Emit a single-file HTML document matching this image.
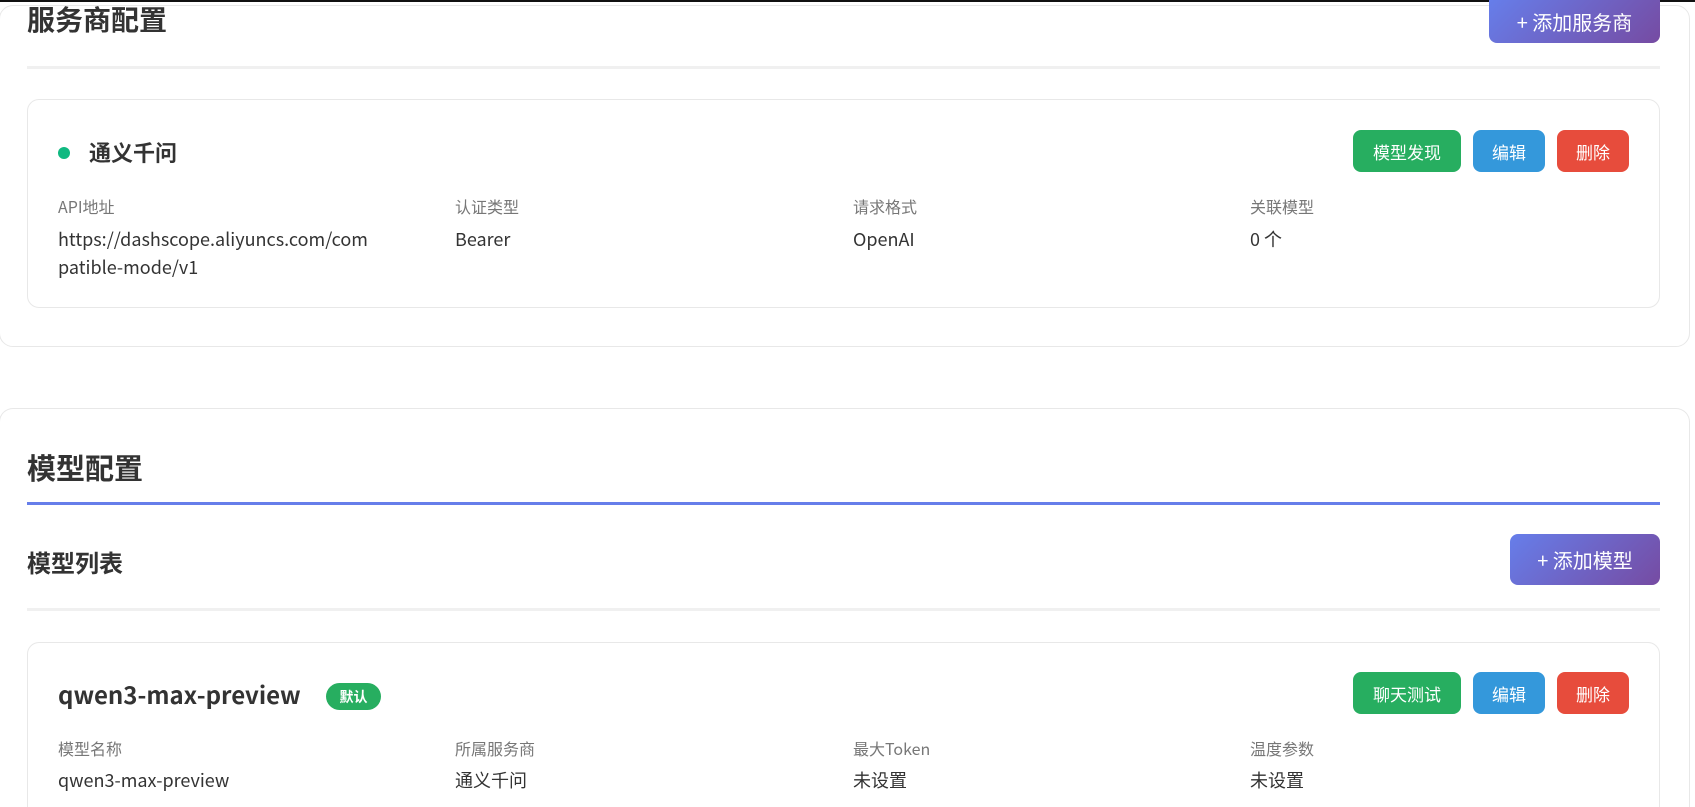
<!DOCTYPE html>
<html style="overflow:hidden;height:807px"><head><meta charset="utf-8"><style>
*{box-sizing:border-box;margin:0;padding:0}
body{width:1695px;height:807px;overflow:hidden;background:#fff;position:relative;font-family:"Noto Sans CJK SC","Liberation Sans",sans-serif;color:#333}
.a{position:absolute}
.panel{position:absolute;left:-1px;width:1691px;border:1px solid #e8e8e8;border-radius:14px;background:#fff}
.card{position:absolute;left:27px;width:1633px;border:1px solid #e8e8e8;border-radius:12px;background:#fff}
.h{position:absolute;font-weight:bold;color:#333;white-space:nowrap;line-height:1}
.btn{position:absolute;color:#fff;font-size:17px;border-radius:8px;display:flex;align-items:center;justify-content:center;height:42px;top:130px}
.g{background:#27ae60}.b{background:#3498db}.r{background:#e74c3c}
.grad{background:linear-gradient(135deg,#667eea,#764ba2);color:#fff;border-radius:8px;display:flex;align-items:center;justify-content:center;font-size:20px;position:absolute}
.div{position:absolute;left:27px;width:1633px;height:3px;background:#f0f0f0}
.lab{position:absolute;font-size:16px;color:#777;line-height:20px;white-space:nowrap}
.val{position:absolute;font-size:18px;color:#333;line-height:28px;width:370px;word-break:break-all}
</style></head><body>
<div class="a" style="left:0;top:0;width:1695px;height:2px;background:#111"></div>
<div class="panel" style="top:5px;height:342px"></div>
<div class="h" style="left:27px;top:5px;font-size:28px">服务商配置</div>
<div class="grad" style="left:1489px;top:0;width:171px;height:43px;border-radius:0 0 8px 8px">+ 添加服务商</div>
<div class="div" style="top:66px"></div>
<div class="card" style="top:99px;height:209px"></div>
<div class="a" style="left:58px;top:147px;width:12px;height:12px;border-radius:50%;background:#10b981"></div>
<div class="h" style="left:89px;top:141px;font-size:22px">通义千问</div>
<div class="btn g" style="left:1353px;width:108px">模型发现</div>
<div class="btn b" style="left:1473px;width:72px">编辑</div>
<div class="btn r" style="left:1557px;width:72px">删除</div>
<div class="lab" style="left:58px;top:196px">API地址</div>
<div class="lab" style="left:455px;top:196px">认证类型</div>
<div class="lab" style="left:853px;top:196px">请求格式</div>
<div class="lab" style="left:1250px;top:196px">关联模型</div>
<div class="val" style="left:58px;top:225px">https://dashscope.aliyuncs.com/com<br>patible-mode/v1</div>
<div class="val" style="left:455px;top:225px">Bearer</div>
<div class="val" style="left:853px;top:225px">OpenAI</div>
<div class="val" style="left:1250px;top:225px">0 个</div>

<div class="panel" style="top:408px;height:420px;border-bottom:none"></div>
<div class="h" style="left:27px;top:453px;font-size:29px">模型配置</div>
<div class="a" style="left:27px;top:502px;width:1633px;height:3px;background:#667eea"></div>
<div class="h" style="left:27px;top:550px;font-size:24px">模型列表</div>
<div class="grad" style="left:1510px;top:534px;width:150px;height:51px">+ 添加模型</div>
<div class="div" style="top:608px"></div>
<div class="card" style="top:642px;height:180px;border-bottom:none"></div>
<div class="h" style="left:58px;top:682px;font-size:24px">qwen3-max-preview</div>
<div class="a" style="left:326px;top:683px;width:55px;height:27px;border-radius:14px;background:#27ae60;color:#fff;font-size:14px;font-weight:bold;display:flex;align-items:center;justify-content:center">默认</div>
<div class="btn g" style="left:1353px;width:108px;top:672px">聊天测试</div>
<div class="btn b" style="left:1473px;width:72px;top:672px">编辑</div>
<div class="btn r" style="left:1557px;width:72px;top:672px">删除</div>
<div class="lab" style="left:58px;top:738px">模型名称</div>
<div class="lab" style="left:455px;top:738px">所属服务商</div>
<div class="lab" style="left:853px;top:738px">最大Token</div>
<div class="lab" style="left:1250px;top:738px">温度参数</div>
<div class="val" style="left:58px;top:766px">qwen3-max-preview</div>
<div class="val" style="left:455px;top:766px">通义千问</div>
<div class="val" style="left:853px;top:766px">未设置</div>
<div class="val" style="left:1250px;top:766px">未设置</div>
</body></html>
